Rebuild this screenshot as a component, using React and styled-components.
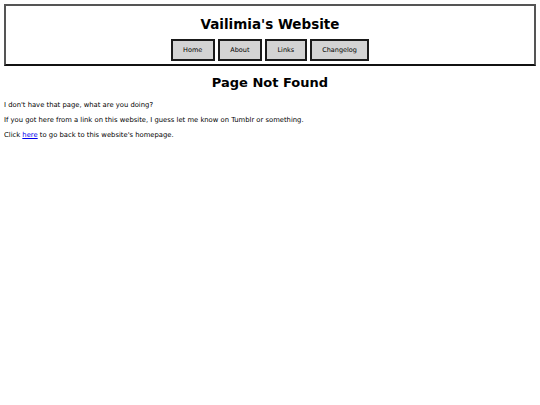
import React from "react";
import styled, { createGlobalStyle } from "styled-components";

const GlobalStyle = createGlobalStyle`
  body {
    margin: 4px;
    background: #ffffff;
    color: #000000;
    font-family: Verdana, "DejaVu Sans", sans-serif;
    font-size: 6.8px;
  }
`;

const Header = styled.header`
  border: 2px solid #555555;
  border-bottom-color: #111111;
  text-align: center;
  padding-bottom: 3px;
`;

const Title = styled.h1`
  margin: 10px 0 7px;
  font-size: 13.5px;
  line-height: 16px;
  font-weight: bold;
`;

const Nav = styled.nav`
  display: flex;
  justify-content: center;
  gap: 3px;
`;

const NavButton = styled.a`
  display: flex;
  align-items: center;
  justify-content: center;
  height: 18px;
  padding: 0 10.5px;
  background: #d3d3d3;
  border: 2px solid #1a1a1a;
  color: #000000;
  font-size: 6.5px;
  text-decoration: none;
`;

const Heading = styled.h2`
  margin: 9px 0 10.5px;
  text-align: center;
  font-size: 13px;
  line-height: 15px;
  font-weight: bold;
`;

const Text = styled.p`
  margin: 0 0 7px;
  line-height: 8px;
  & a {
    color: #0000ee;
  }
`;

const links = ["Home", "About", "Links", "Changelog"];

function App() {
  return (
    <>
      <GlobalStyle />
      <Header>
        <Title>Vailimia's Website</Title>
        <Nav>
          {links.map((l) => (
            <NavButton key={l} href="#">
              {l}
            </NavButton>
          ))}
        </Nav>
      </Header>
      <main>
        <Heading>Page Not Found</Heading>
        <Text>I don't have that page, what are you doing?</Text>
        <Text>
          If you got here from a link on this website, I guess let me know on
          Tumblr or something.
        </Text>
        <Text>
          Click <a href="#">here</a> to go back to this website's homepage.
        </Text>
      </main>
    </>
  );
}

export default App;
